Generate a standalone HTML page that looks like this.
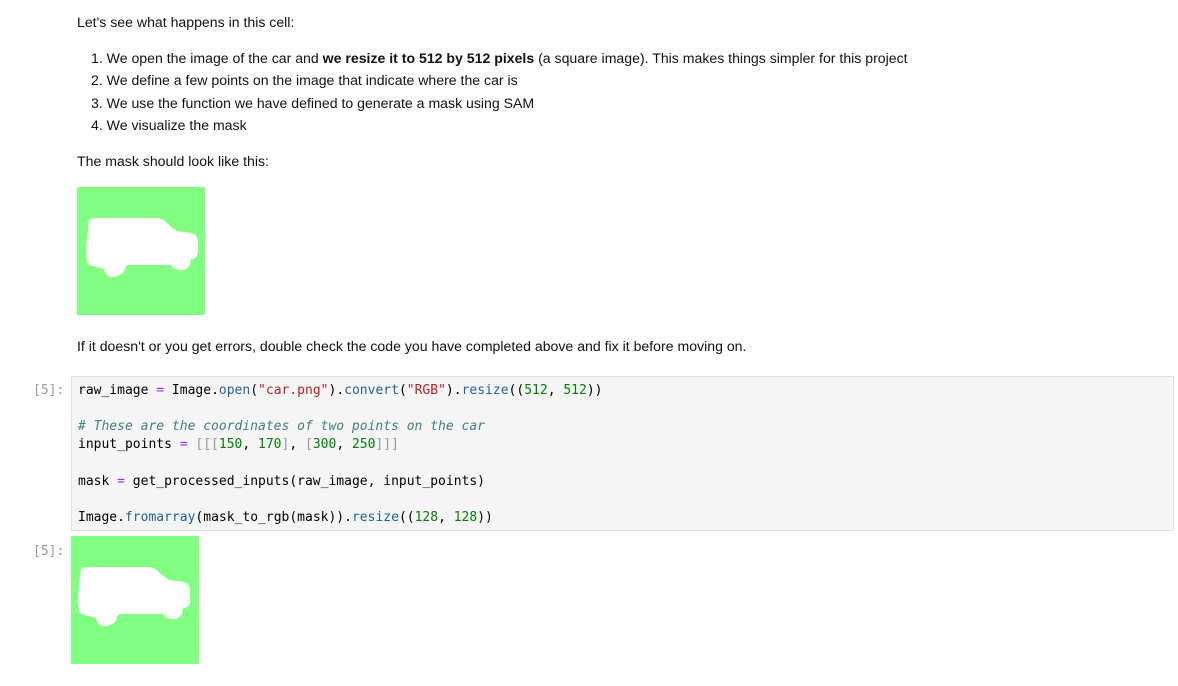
<!DOCTYPE html>
<html><head><meta charset="utf-8"><style>
body{margin:0;width:1178px;height:686px;background:#fff;position:relative;overflow:hidden;font-family:"Liberation Sans","DejaVu Sans",sans-serif;color:#111}
.t{position:absolute;font-size:14.1px;white-space:nowrap;line-height:18px}
.m{position:absolute;font-family:"DejaVu Sans Mono",monospace;font-size:13px;white-space:pre;line-height:18px;color:#000}
.p{position:absolute;font-family:"DejaVu Sans Mono",monospace;font-size:13px;color:#999;line-height:18px}
.box{position:absolute;left:71px;top:376px;width:1101px;height:153px;background:#f5f5f5;border:1px solid #e0e0e0}
.o{color:#aa22ff}.f{color:#1f5fa5}.s{color:#ba2121}.n{color:#008000}.c{color:#408080;font-style:italic}.b{color:#999}
</style></head><body>
<div class="t" style="left:77px;top:13px">Let's see what happens in this cell:</div>
<div class="t" style="left:91px;top:49px">1. We open the image of the car and <b>we resize it to 512 by 512 pixels</b> (a square image). This makes things simpler for this project</div>
<div class="t" style="left:91px;top:71px">2. We define a few points on the image that indicate where the car is</div>
<div class="t" style="left:91px;top:94px">3. We use the function we have defined to generate a mask using SAM</div>
<div class="t" style="left:91px;top:116px">4. We visualize the mask</div>
<div class="t" style="left:77px;top:152px">The mask should look like this:</div>
<svg style="position:absolute;left:77px;top:187px" width="128" height="128" viewBox="0 0 128 128"><rect width="128" height="128" fill="#80ff80"/><path fill="#fff" d="M12 33 Q14 31 20 31 L80 31 Q86 31 92 38 L100 44 L115 46 Q121 48 121 55 L121 66 Q120 72 114 72 L113 78 Q110 84 102 83 Q96 82 94 78 L50 78 L46 86 Q40 91 33 90 Q28 88 27 82 L12 78 Q9 76 9 60 Z"/></svg>
<div class="t" style="left:77px;top:337px">If it doesn't or you get errors, double check the code you have completed above and fix it before moving on.</div>
<div class="box"></div>
<div class="p" style="left:33px;top:382px">[5]:</div>
<div class="m" style="left:78px;top:382px">raw_image <span class="o">=</span> Image<span>.</span><span class="f">open</span>(<span class="s">"car.png"</span>)<span>.</span><span class="f">convert</span>(<span class="s">"RGB"</span>)<span>.</span><span class="f">resize</span>((<span class="n">512</span>, <span class="n">512</span>))</div>
<div class="m" style="left:78px;top:418px"><span class="c"># These are the coordinates of two points on the car</span></div>
<div class="m" style="left:78px;top:436px">input_points <span class="o">=</span> <span class="b">[[[</span><span class="n">150</span>, <span class="n">170</span><span class="b">]</span>, <span class="b">[</span><span class="n">300</span>, <span class="n">250</span><span class="b">]]]</span></div>
<div class="m" style="left:78px;top:473px">mask <span class="o">=</span> get_processed_inputs(raw_image, input_points)</div>
<div class="m" style="left:78px;top:509px">Image<span>.</span><span class="f">fromarray</span>(mask_to_rgb(mask))<span>.</span><span class="f">resize</span>((<span class="n">128</span>, <span class="n">128</span>))</div>
<div class="p" style="left:33px;top:543px">[5]:</div>
<svg style="position:absolute;left:71px;top:536px" width="128" height="128" viewBox="0 0 128 128"><rect width="128" height="128" fill="#80ff80"/><path fill="#fff" d="M10 33 Q12 31 18 31 L78 31 Q84 31 90 38 L98 44 L113 46 Q119 48 119 55 L119 66 Q118 72 112 72 L111 78 Q108 84 100 83 Q94 82 92 78 L48 78 L44 86 Q38 91 31 90 Q26 88 25 82 L10 78 Q7 76 7 60 Z"/></svg>
</body></html>
